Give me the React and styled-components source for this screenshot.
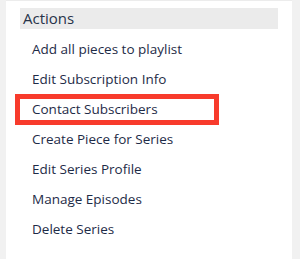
import React from 'react'
import styled, { createGlobalStyle } from 'styled-components'

const GlobalStyle = createGlobalStyle`
  html, body {
    margin: 0;
    padding: 0;
    background: #f1f1f1;
  }
  body {
    font-family: 'Open Sans', 'Liberation Sans', sans-serif;
  }
`

const actions = [
  'Add all pieces to playlist',
  'Edit Subscription Info',
  'Contact Subscribers',
  'Create Piece for Series',
  'Edit Series Profile',
  'Manage Episodes',
  'Delete Series',
]

const App = () => {
  return (
    <>
      <GlobalStyle />
      <Panel>
        <Header>Actions</Header>
        <List>
          {actions.map((label) => (
            <Item key={label} $highlighted={label === 'Contact Subscribers'}>
              {label}
            </Item>
          ))}
        </List>
      </Panel>
    </>
  )
}

const Panel = styled.section`
  margin-left: 6px;
  width: 286px;
  height: 259px;
  box-sizing: border-box;
  background: #fff;
  border-top: 1px solid #ececec;
  padding: 7px 14px 0;
`

const Header = styled.h3`
  margin: 0;
  height: 21px;
  line-height: 21px;
  padding-left: 3px;
  background: #ebebeb;
  font-size: 15px;
  font-weight: 400;
  color: #273349;
`

const List = styled.ul`
  list-style: none;
  margin: 5px 0 0;
  padding: 0 0 0 12px;
`

const Item = styled.li`
  position: relative;
  height: 30px;
  line-height: 30px;
  font-size: 13.5px;
  color: #1e2b47;

  &::after {
    content: '';
    display: ${(p) => (p.$highlighted ? 'block' : 'none')};
    position: absolute;
    left: -17px;
    top: 0;
    width: 204px;
    height: 31px;
    box-sizing: border-box;
    border: 5px solid #f83b2c;
  }
`

export default App
